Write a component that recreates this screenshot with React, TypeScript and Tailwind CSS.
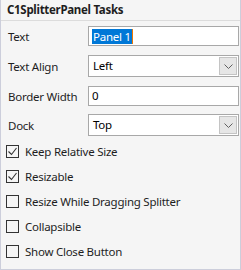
import React from "react";

function Chevron() {
  return (
    <svg width="9" height="5" viewBox="0 0 9 5" className="block">
      <polyline points="0.5,0.5 4.5,4.5 8.5,0.5" fill="none" stroke="#606060" strokeWidth="1" />
    </svg>
  );
}

function Check() {
  return (
    <svg width="11" height="11" viewBox="0 0 11 11" className="block">
      <polyline points="1.5,5.5 4.5,8.5 9.5,2" fill="none" stroke="#333333" strokeWidth="1.1" />
    </svg>
  );
}

const txt = "text-[11.5px] tracking-[-0.25px]";

function FieldRow({ label, children, h = "h-[30px]" }: { label: string; children: React.ReactNode; h?: string }) {
  return (
    <div className={`flex ${h} items-center`}>
      <div className={`w-[87px] pl-[7px] pt-[1px] ${txt} text-[#1e1e1e]`}>{label}</div>
      {children}
    </div>
  );
}

function TextBox({ children }: { children: React.ReactNode }) {
  return (
    <div className={`flex h-[20px] w-[151px] items-center border border-[#a8a8a8] bg-white pl-[3px] ${txt} text-black`}>
      {children}
    </div>
  );
}

function Dropdown({ value }: { value: string }) {
  return (
    <div className={`flex h-[22px] w-[151px] items-center justify-between border border-[#a8a8a8] bg-white pl-[4px] pr-[1px] ${txt} text-black`}>
      <span>{value}</span>
      <div className="flex h-[18px] w-[18px] items-center justify-center border border-[#c4c4c4] bg-[#e6e6e6]">
        <Chevron />
      </div>
    </div>
  );
}

function CheckRow({ label, checked }: { label: string; checked?: boolean }) {
  return (
    <div className="flex h-[25px] items-center pl-[5px]">
      <div className="flex h-[13px] w-[13px] items-center justify-center border border-[#333333]">
        {checked ? <Check /> : null}
      </div>
      <span className={`ml-[6px] ${txt} text-[#1e1e1e]`}>{label}</span>
    </div>
  );
}

export default function App() {
  return (
    <div
      className="flex h-[270px] w-[241px] flex-col border-b border-l border-r border-[#cccedb] bg-[#f5f5f5]"
      style={{ fontFamily: '"Noto Sans", "Open Sans", sans-serif' }}
    >
      <div className="flex h-[21px] items-center border-b border-[#dcdcdc] pl-[6px] text-[11.5px] font-bold tracking-[-0.3px] text-[#1e1e1e]">
        C1SplitterPanel Tasks
      </div>
      <FieldRow label="Text">
        <TextBox>
          <span className="bg-[#0078d7] px-[1px] leading-[15px] text-white">Panel 1</span>
          <span className="h-[15px] w-[1px] bg-[#f07800]" />
        </TextBox>
      </FieldRow>
      <FieldRow label="Text Align">
        <Dropdown value="Left" />
      </FieldRow>
      <FieldRow label="Border Width">
        <TextBox>0</TextBox>
      </FieldRow>
      <FieldRow label="Dock" h="h-[28px]">
        <Dropdown value="Top" />
      </FieldRow>
      <CheckRow label="Keep Relative Size" checked />
      <CheckRow label="Resizable" checked />
      <CheckRow label="Resize While Dragging Splitter" />
      <CheckRow label="Collapsible" />
      <CheckRow label="Show Close Button" />
    </div>
  );
}
